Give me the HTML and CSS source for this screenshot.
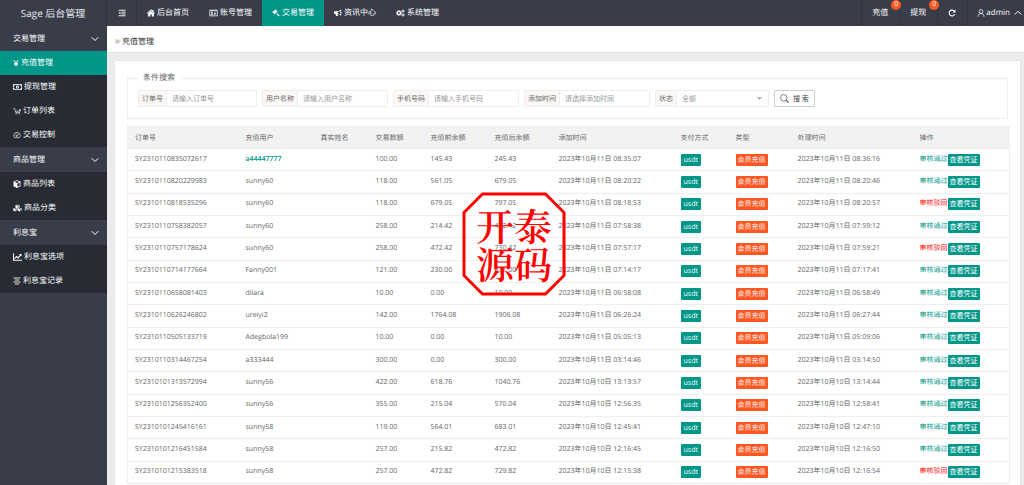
FILE: index.html
```
<!DOCTYPE html>
<html lang="zh-CN">
<head>
  <meta charset="UTF-8" />
  <meta name="viewport" content="width=device-width, initial-scale=1.0" />
  <title>Sage 后台管理</title>
  <link rel="stylesheet" href="styles.css">
</head>
<body>
  <svg class="sprite" aria-hidden="true">
    <symbol id="i-menu" viewBox="0 0 16 16"><path d="M1 2.500h14M7 6.200h8M7 9.800h8M1 13.500h14" fill="none" stroke="currentColor" stroke-width="1.800"/><path d="M1 8l4-2.600v5.200z"/></symbol>
    <symbol id="i-home" viewBox="0 0 16 16"><path d="M8 .6l2.800 2.500V2h2.400v3.300L16 8.200l-1 1.300L8 3.200 1 9.500 0 8.200z"/><path d="M8 4l5.800 5.200V15H9.600v-4H6.400v4H2.200V9.200z"/></symbol>
    <symbol id="i-card" viewBox="0 0 20 16"><path fill-rule="evenodd" d="M1 1h18v14H1zM2.500 3v10.500h15V3z"/><circle cx="6.500" cy="6.500" r="2"/><path d="M3.500 12c0-4 6-4 6 0zM11 5h5v1.500h-5zM11 8h5v1.500h-5zM11 11h3v1.200h-3z"/></symbol>
    <symbol id="i-gavel" viewBox="0 0 16 16"><path d="M6.500 .5l5 5-1.200 1.200-.6-.5-1.700 1.700 1.300 1.200 1-.8 5.200 4.800-2 2-5-5.100.7-1-1.300-1.300-1.500 1.500.5.700-1.200 1.200-5.200-5.200 1.200-1.200.7.500 3.700-3.600-.6-.8z"/></symbol>
    <symbol id="i-horn" viewBox="0 0 18 16"><path fill-rule="evenodd" d="M1 4h6c3 0 6-1.500 8-3.500h1.200v5c1.800.3 1.800 3 0 3.300v5H15c-2-2-4.500-3.300-7-3.600-.8 1.200-.2 2.200 1.300 3.200-.8 1.800-3.200 2-4.700 1.100-.5-1.700-1-2.900-.6-4.500H1c-1.300-1-1.300-5 0-6zM8.500 5.500v3.400c2.300.3 4.200 1.200 6 2.500V3c-1.800 1.400-3.700 2.200-6 2.500z"/></symbol>
    <symbol id="i-cogs" viewBox="0 0 20 16"><circle cx="6.500" cy="8" r="3.600" fill="none" stroke="currentColor" stroke-width="3"/><circle cx="6.500" cy="8" r="5.600" fill="none" stroke="currentColor" stroke-width="1.800" stroke-dasharray="2.200 2.200"/><circle cx="15.500" cy="3.700" r="2" fill="none" stroke="currentColor" stroke-width="1.800"/><circle cx="15.500" cy="3.700" r="3" fill="none" stroke="currentColor" stroke-width="1.200" stroke-dasharray="1.570"/><circle cx="15.500" cy="12.300" r="2" fill="none" stroke="currentColor" stroke-width="1.800"/><circle cx="15.500" cy="12.300" r="3" fill="none" stroke="currentColor" stroke-width="1.200" stroke-dasharray="1.570"/></symbol>
    <symbol id="i-yen" viewBox="0 0 12 16"><path d="M1.500 2L6 8.500 10.500 2M6 8v6.500M2 8.600h8M2 11.400h8" fill="none" stroke="currentColor" stroke-width="2"/></symbol>
    <symbol id="i-money" viewBox="0 0 20 16"><path fill-rule="evenodd" d="M0 2h20v12H0zM3.800 3.600c0 1.400-1 2.400-2.300 2.400v4c1.300 0 2.300 1 2.300 2.400h12.400c0-1.400 1-2.400 2.300-2.400V6c-1.300 0-2.300-1-2.300-2.400z"/><path fill-rule="evenodd" d="M10 4c4.300 0 4.300 8 0 8s-4.300-8 0-8zM9 6v1h.6v2.500H8.800v1h2.600v-1h-.8V5.600H10z"/></symbol>
    <symbol id="i-cart" viewBox="0 0 18 16"><path d="M.5 2h3l2.800 9.500h8.500L17 4.500h-2.500M14.500 4.500v3.800H6" fill="none" stroke="currentColor" stroke-width="1.400"/><circle cx="7" cy="14" r="1.300"/><circle cx="14" cy="14" r="1.300"/></symbol>
    <symbol id="i-gauge" viewBox="0 0 18 16"><path d="M3.800 14A7.200 7.200 0 1 1 14.200 14zM8.500 10.500L13 5.500M4 9h1.500M9 3.500V5M5.300 5.500l1 1" fill="none" stroke="currentColor" stroke-width="1.400"/><circle cx="8.500" cy="10.300" r="1.500"/></symbol>
    <symbol id="i-cube" viewBox="0 0 16 16"><path fill-rule="evenodd" d="M8 .5l7 2.700v9.300l-7 3.300-7-3.300V3.200zM8 2L3 4l5 1.900L13 4zM8.800 7.500v6.200l4.700-2.300V5.700z"/></symbol>
    <symbol id="i-cubes" viewBox="0 0 20 16"><path fill-rule="evenodd" d="M10 .3l4.600 1.800v5l-4.600 2-4.600-2v-5zM10 1.600L7.200 2.700l2.800 1.100 2.800-1.100zM10.600 5v2.700l2.900-1.200V3.900z"/><path fill-rule="evenodd" d="M5 7.300l4.600 1.800v4.700L5 15.900.4 13.800V9.100zM5 8.600L2.200 9.700 5 10.800l2.800-1.100zM5.600 12v2.600l2.900-1.300v-2.400z"/><path fill-rule="evenodd" d="M15 7.300l4.600 1.800v4.700L15 15.900l-4.600-2.100V9.100zM15 8.600l-2.800 1.100 2.800 1.100 2.800-1.100zM15.600 12v2.600l2.900-1.300v-2.400z"/></symbol>
    <symbol id="i-chart" viewBox="0 0 18 16"><path d="M1 1v13.500h17M3 11.500l4-4.500 3 2.800 5.500-6" fill="none" stroke="currentColor" stroke-width="2.200"/><path d="M12 2h5v5z"/></symbol>
    <symbol id="i-lines" viewBox="0 0 16 16"><path d="M1 2h14M3.500 6h9M1 10h14M3.500 14h9" fill="none" stroke="currentColor" stroke-width="1.700"/></symbol>
    <symbol id="i-down" viewBox="0 0 16 16"><path d="M1.500 4.500L8 11l6.500-6.500" fill="none" stroke="currentColor" stroke-width="2"/></symbol>
    <symbol id="i-up" viewBox="0 0 16 16"><path d="M1.500 11L8 4.500l6.500 6.500" fill="none" stroke="currentColor" stroke-width="2"/></symbol>
    <symbol id="i-refresh" viewBox="0 0 16 16"><path d="M13.500 10.300A5.800 5.800 0 1 1 12.300 4" fill="none" stroke="currentColor" stroke-width="2.200"/><path d="M15 1v6H9z"/></symbol>
    <symbol id="i-user" viewBox="0 0 16 16"><circle cx="8" cy="5" r="3.800" fill="none" stroke="currentColor" stroke-width="1.500"/><path d="M2 15.500c0-4 2-6.500 6-6.500s6 2.500 6 6.500" fill="none" stroke="currentColor" stroke-width="1.500"/></symbol>
    <symbol id="i-search" viewBox="0 0 16 16"><circle cx="6.800" cy="6.800" r="5.800" fill="none" stroke="currentColor" stroke-width="1.200"/><path d="M11 11l4.200 4.200" stroke="currentColor" stroke-width="1.800"/></symbol>
  </svg>

  <header class="header">
    <div class="logo">Sage 后台管理</div>
    <button class="toggle" type="button" aria-label="菜单"><svg class="icon"><use href="#i-menu"/></svg></button>
    <nav class="nav">
      <a href="#"><svg class="icon"><use href="#i-home"/></svg>后台首页</a>
      <a href="#"><svg class="icon wide"><use href="#i-card"/></svg>账号管理</a>
      <a href="#" class="active"><svg class="icon"><use href="#i-gavel"/></svg>交易管理</a>
      <a href="#"><svg class="icon"><use href="#i-horn"/></svg>资讯中心</a>
      <a href="#"><svg class="icon wide"><use href="#i-cogs"/></svg>系统管理</a>
    </nav>
    <div class="tools">
      <a href="#">充值<span class="count">0</span></a>
      <a href="#">提现<span class="count">0</span></a>
      <button type="button" aria-label="刷新"><svg class="icon"><use href="#i-refresh"/></svg></button>
      <a href="#" class="user"><svg class="icon"><use href="#i-user"/></svg>admin<svg class="icon arrow"><use href="#i-up"/></svg></a>
    </div>
  </header>

  <div class="shell">
    <aside class="sidebar">
      <a class="group" href="#">交易管理<svg class="icon"><use href="#i-down"/></svg></a>
      <a class="item active" href="#"><svg class="icon narrow"><use href="#i-yen"/></svg>充值管理</a>
      <a class="item" href="#"><svg class="icon wide"><use href="#i-money"/></svg>提现管理</a>
      <a class="item" href="#"><svg class="icon"><use href="#i-cart"/></svg>订单列表</a>
      <a class="item" href="#"><svg class="icon"><use href="#i-gauge"/></svg>交易控制</a>
      <a class="group" href="#">商品管理<svg class="icon"><use href="#i-down"/></svg></a>
      <a class="item" href="#"><svg class="icon"><use href="#i-cube"/></svg>商品列表</a>
      <a class="item" href="#"><svg class="icon wide"><use href="#i-cubes"/></svg>商品分类</a>
      <a class="group" href="#">利息宝<svg class="icon"><use href="#i-down"/></svg></a>
      <a class="item" href="#"><svg class="icon wide"><use href="#i-chart"/></svg>利息宝选项</a>
      <a class="item" href="#"><svg class="icon"><use href="#i-lines"/></svg>利息宝记录</a>
    </aside>

    <main class="main">
      <div class="crumb"><span>»</span> 充值管理</div>
      <section class="card">
        <form>
          <fieldset class="search">
            <legend>条件搜索</legend>
            <div class="fields">
              <div class="field"><label for="order">订单号</label><input id="order" type="text" placeholder="请输入订单号"></div>
              <div class="field"><label for="name">用户名称</label><input id="name" type="text" placeholder="请输入用户名称"></div>
              <div class="field"><label for="phone">手机号码</label><input id="phone" type="text" placeholder="请输入手机号码"></div>
              <div class="field"><label for="time">添加时间</label><input id="time" type="text" placeholder="请选择添加时间"></div>
              <div class="field"><label for="status">状态</label><select id="status"><option>全部</option></select></div>
              <button class="search-btn" type="button"><svg class="icon"><use href="#i-search"/></svg>搜 索</button>
            </div>
          </fieldset>
        </form>
        <table class="table">
          <colgroup>
            <col class="c-order"><col class="c-user"><col class="c-sm"><col class="c-sm"><col class="c-md"><col class="c-md">
            <col class="c-time"><col class="c-sm"><col class="c-type"><col class="c-time"><col class="c-act">
          </colgroup>
          <thead>
            <tr><th>订单号</th><th>充值用户</th><th>真实姓名</th><th>交易数额</th><th>充值前余额</th><th>充值后余额</th><th>添加时间</th><th>支付方式</th><th>类型</th><th>处理时间</th><th>操作</th></tr>
          </thead>
          <tbody id="rows"></tbody>
        </table>
      </section>
    </main>
  </div>

  <div class="stamp">
    <svg class="stamp-frame" viewBox="0 0 104 104"><path d="M20.500 2h63L102 20.500v63L83.500 102h-63L2 83.500v-63z"/></svg>
    <div class="stamp-text">开泰<br>源码</div>
  </div>

  <script>
    // order, user, amount, before, after, added, handled, approved
    const rows = [
      ["SY2310110835072617", "a44447777", "100.00", "145.43", "245.43", "11日 08:35:07", "11日 08:36:16", true],
      ["SY2310110820229983", "sunny60", "118.00", "561.05", "679.05", "11日 08:20:22", "11日 08:20:46", true],
      ["SY2310110818535296", "sunny60", "118.00", "679.05", "797.05", "11日 08:18:53", "11日 08:20:57", false],
      ["SY2310110758382057", "sunny60", "258.00", "214.42", "472.42", "11日 07:58:38", "11日 07:59:12", true],
      ["SY2310110757178624", "sunny60", "258.00", "472.42", "730.42", "11日 07:57:17", "11日 07:59:21", false],
      ["SY2310110714177664", "Fanny001", "121.00", "230.00", "351.00", "11日 07:14:17", "11日 07:17:41", true],
      ["SY2310110658081403", "dilara", "10.00", "0.00", "10.00", "11日 06:58:08", "11日 06:58:49", true],
      ["SY2310110626246802", "ureiyi2", "142.00", "1764.08", "1906.08", "11日 06:26:24", "11日 06:27:44", true],
      ["SY2310110505133719", "Adegbola199", "10.00", "0.00", "10.00", "11日 05:05:13", "11日 05:09:06", true],
      ["SY2310110314467254", "a333444", "300.00", "0.00", "300.00", "11日 03:14:46", "11日 03:14:50", true],
      ["SY2310101313572994", "sunny56", "422.00", "618.76", "1040.76", "10日 13:13:57", "10日 13:14:44", true],
      ["SY2310101256352400", "sunny56", "355.00", "215.04", "570.04", "10日 12:56:35", "10日 12:58:41", true],
      ["SY2310101245416161", "sunny58", "119.00", "564.01", "683.01", "10日 12:45:41", "10日 12:47:10", true],
      ["SY2310101216451584", "sunny58", "257.00", "215.82", "472.82", "10日 12:16:45", "10日 12:16:50", true],
      ["SY2310101215383518", "sunny58", "257.00", "472.82", "729.82", "10日 12:15:38", "10日 12:16:54", false]
    ];

    document.getElementById("rows").innerHTML = rows.map(([order, user, amount, before, after, added, handled, ok], i) => `
      <tr>
        <td>${order}</td>
        <td>${i === 0 ? `<a class="user-link" href="#">${user}</a>` : user}</td>
        <td></td>
        <td>${amount}</td>
        <td>${before}</td>
        <td>${after}</td>
        <td>2023年10月${added}</td>
        <td><span class="tag">usdt</span></td>
        <td><span class="tag orange">会员充值</span></td>
        <td>2023年10月${handled}</td>
        <td><div class="actions"><span class="${ok ? "pass" : "reject"}">${ok ? "审核通过" : "审核驳回"}</span><button class="tag" type="button">查看凭证</button></div></td>
      </tr>`).join("");
  </script>
</body>
</html>
```
FILE: styles.css
```
* {
  box-sizing: border-box;
}
body {
  margin: 0;
  height: 100vh;
  display: flex;
  flex-direction: column;
  overflow: hidden;
  font-family: "Open Sans", "Noto Sans CJK SC", sans-serif;
  font-size: 7px;
  line-height: 12px;
  color: #666;
  background: #ececec;
  text-rendering: geometricPrecision;
}
a {
  color: inherit;
  text-decoration: none;
}
button, input, select {
  font: inherit;
  color: inherit;
  margin: 0;
}
.sprite {
  display: none;
}
.icon {
  width: 8px;
  height: 8px;
  flex: none;
  fill: currentColor;
}
.icon.wide { width: 9px; }
.icon.narrow { width: 6px; }

/* top bar */
.header {
  display: flex;
  flex: none;
  height: 26px;
  background: #393d49;
  color: #fff;
  font-size: 8px;
}
.logo {
  width: 107px;
  flex: none;
  font-size: 10px;
  line-height: 26px;
  text-align: center;
  color: #e6e7e9;
  border-right: 1px solid #32353f;
}
.toggle {
  width: 30px;
  padding: 0;
  border: 0;
  border-right: 1px solid #32353f;
  background: none;
  line-height: 0;
}
.nav {
  display: flex;
}
.nav a {
  display: flex;
  align-items: center;
  gap: 2px;
  padding: 0 10px;
}
.nav a.active {
  background: #009688;
}
.tools {
  display: flex;
  margin-left: auto;
}
.tools a, .tools button {
  position: relative;
  display: flex;
  align-items: center;
  padding: 0 11px 0 10px;
  border: 0;
  border-left: 1px solid #32353f;
  background: none;
}
.tools .user {
  gap: 1px;
  padding: 0 2px 0 9px;
}
.user .arrow {
  margin-left: 3px;
}
.count {
  position: absolute;
  top: 0;
  right: -2px;
  width: 10px;
  height: 10px;
  border-radius: 50%;
  background: #ff5722;
  font-size: 7px;
  line-height: 10px;
  text-align: center;
  z-index: 1;
}

.shell {
  display: flex;
  flex: 1;
  min-height: 0;
}

/* left menu */
.sidebar {
  width: 107px;
  flex: none;
  background: #393d49;
  color: #fff;
  font-size: 8px;
}
.sidebar a {
  display: flex;
  align-items: center;
  padding: 0 8px 0 13px;
}
.sidebar .group {
  height: 25px;
  justify-content: space-between;
}
.sidebar .item {
  height: 24px;
  gap: 2px;
  background: #282b33;
}
.sidebar .item.active {
  background: #009688;
}

/* content */
.main {
  flex: 1;
  min-width: 0;
}
.crumb {
  height: 27px;
  padding-left: 8px;
  font-size: 8px;
  line-height: 28px;
  color: #333;
  background: #fff;
  border-bottom: 1px solid #e0e0e0;
}
.crumb span {
  font-size: 10px;
  color: #999;
}
.card {
  margin: 8px 4px 0 8px;
  padding: 12px;
  background: #fff;
  box-shadow: 0 0 2px #d8d8d8;
}
.search {
  margin: 0 0 7px;
  padding: 7px 10px 11px;
  border: 1px solid #eee;
}
.search legend {
  padding: 0 5px;
  font-size: 8px;
  line-height: 10px;
}
.fields {
  display: flex;
  gap: 5px;
}
.field {
  display: flex;
  width: 126px;
  height: 17px;
  border: 1px solid #eee;
  border-radius: 1px;
}
.field:first-child {
  width: 119px;
}
.field:nth-child(5) {
  width: 114px;
}
.field label {
  flex: none;
  padding: 0 3px;
  height: 15px;
  line-height: 17px;
  background: #fcf7f5;
  border-right: 1px solid #eee;
}
.field input, .field select {
  flex: 1;
  width: 0;
  min-width: 0;
  padding: 1px 5px 0;
  border: 0;
  outline: 0;
  background: none;
}
.field input::placeholder {
  color: #999;
}
.field select {
  appearance: none;
  color: #999;
  background: conic-gradient(from -50deg at 50% 100%, #bbb 100deg, transparent 0) right 5px center / 7px 3px no-repeat;
}
.search-btn {
  display: flex;
  align-items: center;
  gap: 4px;
  height: 17px;
  padding: 0 5px;
  border: 1px solid #ccc;
  border-radius: 1px;
  background: #fff;
  color: #444;
}
.search-btn .icon {
  width: 9px;
  height: 9px;
}

.table {
  width: 100%;
  height: 358px;
  table-layout: fixed;
  border-collapse: collapse;
  border: 1px solid #eee;
}
.c-order { width: 111px; }
.c-user { width: 75px; }
.c-sm { width: 55px; }
.c-md { width: 64px; }
.c-type { width: 62px; }
.c-time { width: 122px; }
.c-act { width: 97px; }
.table th, .table td {
  padding: 0 0 0 7px;
  text-align: left;
  font-weight: normal;
  white-space: nowrap;
  border-bottom: 1px solid #eee;
}
.table th {
  height: 22px;
  padding-top: 2px;
}
.table thead tr {
  background: #f2f2f2;
}
.user-link {
  color: #009688;
  font-weight: 600;
}
.tag {
  display: inline-block;
  height: 12px;
  padding: 0 2px;
  border: 0;
  border-radius: 1px;
  background: #009688;
  color: #fff;
  line-height: 14px;
  vertical-align: top;
}
span.tag {
  padding: 0 3px;
}
.tag.orange {
  padding: 0 2px;
  background: #ff5722;
}
.actions {
  display: flex;
  align-items: center;
}
button.tag {
  line-height: 12px;
}
.pass { color: #009688; }
.reject { color: #f00; }

/* seal over the table */
.stamp {
  position: absolute;
  left: calc(50% - 50px);
  top: calc(50% - 51px);
  width: 104px;
  height: 104px;
  display: grid;
  place-items: center;
  color: #f00;
  pointer-events: none;
}
.stamp > * {
  grid-area: 1 / 1;
}
.stamp-frame {
  width: 100%;
  fill: none;
  stroke: currentColor;
  stroke-width: 3px;
}
.stamp-text {
  font-family: "Noto Serif CJK SC", "Noto Sans CJK SC", serif;
  font-size: 38px;
  font-weight: 600;
  line-height: 38px;
}
```
